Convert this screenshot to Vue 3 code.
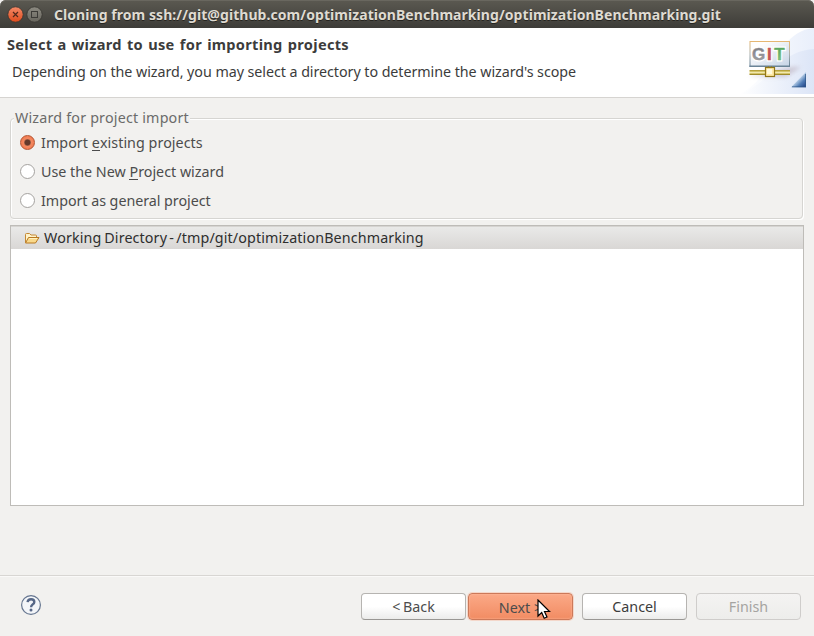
<script setup>
import { ref } from 'vue'

const options = [
  { id: 'existing', before: 'Import ', key: 'e', after: 'xisting projects' },
  { id: 'new', before: 'Use the New ', key: 'P', after: 'roject wizard' },
  { id: 'general', before: 'Import as general project', key: '', after: '' }
]
const selected = ref('existing')
</script>

<template>
  <div class="window">
    <header class="titlebar">
      <svg class="controls" width="40" height="20" viewBox="0 0 40 20">
        <defs>
          <linearGradient id="close" x1="0" y1="0" x2="0" y2="1">
            <stop offset="0" stop-color="#f58a68" /><stop offset="1" stop-color="#df4b1c" />
          </linearGradient>
          <linearGradient id="max" x1="0" y1="0" x2="0" y2="1">
            <stop offset="0" stop-color="#8c8a81" /><stop offset="1" stop-color="#67655d" />
          </linearGradient>
        </defs>
        <circle cx="9.5" cy="10.5" r="7.7" fill="url(#close)" stroke="#35342f" stroke-width=".8" />
        <path d="M7 8l5 5M12 8l-5 5" stroke="#51281b" stroke-width="1.2" />
        <circle cx="28.5" cy="10.5" r="7.7" fill="url(#max)" stroke="#35342f" stroke-width=".8" />
        <rect x="25.5" y="7.5" width="6" height="6" fill="none" stroke="#3c3b37" />
      </svg>
      <h1><span>Cloning from ssh://git@github.com/optimizationBenchmarking/optimizationBenchmarking.git</span></h1>
    </header>

    <section class="banner">
      <div class="intro">
        <h2><span>Select a wizard to use for importing projects</span></h2>
        <p><span>Depending on the wizard, you may select a directory to determine the wizard's scope</span></p>
      </div>
      <svg class="art" width="75" height="66" viewBox="739 28 75 66">
        <defs>
          <linearGradient id="sky" x1="0" y1="0" x2="1" y2="0">
            <stop offset="0" stop-color="#fff" /><stop offset="1" stop-color="#dce5f7" />
          </linearGradient>
          <linearGradient id="sky2" x1="0" y1="0" x2="1" y2="0">
            <stop offset="0" stop-color="#fff" /><stop offset="1" stop-color="#e9effb" />
          </linearGradient>
          <linearGradient id="board" x1="0" y1="0" x2="1" y2="1">
            <stop offset=".2" stop-color="#fff" /><stop offset="1" stop-color="#c5d3e5" />
          </linearGradient>
          <linearGradient id="frame" x1="0" y1="0" x2="0" y2="1">
            <stop offset="0" stop-color="#e5b773" /><stop offset=".5" stop-color="#a9b0ae" /><stop offset="1" stop-color="#648096" />
          </linearGradient>
          <linearGradient id="corner" x1="0" y1="0" x2="1" y2="1">
            <stop offset=".45" stop-color="#c9dcf0" /><stop offset=".7" stop-color="#537fb7" /><stop offset="1" stop-color="#18397f" />
          </linearGradient>
          <linearGradient id="gray" x1="0" y1="0" x2="0" y2="1">
            <stop offset="0" stop-color="#77777e" /><stop offset="1" stop-color="#a9a9ac" />
          </linearGradient>
          <linearGradient id="green" x1="0" y1="0" x2="0" y2="1">
            <stop offset="0" stop-color="#4b9c50" /><stop offset="1" stop-color="#8bcb91" />
          </linearGradient>
          <filter id="soft" x="-20%" y="-50%" width="140%" height="200%"><feGaussianBlur stdDeviation="2" /></filter>
        </defs>
        <path d="M739 94C772 80 778 31 814 28V94Z" fill="url(#sky2)" />
        <path d="M739 94C772 84 775 52 814 49V94Z" fill="url(#sky)" />
        <path d="M748 76l44-9h9l-15 10z" fill="#b5a8b5" opacity=".55" filter="url(#soft)" />
        <rect x="750" y="41.5" width="39.5" height="25" fill="url(#board)" stroke="url(#frame)" />
        <path d="M749.5 66.2h40.5" stroke="#6a8497" stroke-width="1.6" />
        <g class="halo">
          <text x="752" y="60">G</text>
          <text x="767" y="60">I</text>
          <text x="774.3" y="60">T</text>
        </g>
        <g class="letters">
          <text x="752" y="60" fill="url(#gray)" stroke="#939398">G</text>
          <text x="767" y="60" fill="#c65357" stroke="#c65357">I</text>
          <text x="774.3" y="60" fill="url(#green)" stroke="#6db374">T</text>
        </g>
        <path d="M749.5 70.5h40.5" stroke="#b7a23c" />
        <path d="M749.5 71.5h40.5M749.5 73.5h40.5" stroke="#d4c369" />
        <path d="M749.5 72.5h40.5" stroke="#f1e8ae" />
        <path d="M749.5 74.5h40.5" stroke="#a08c2c" />
        <path d="M768.5 66v2M771.5 66v2" stroke="#8d8445" />
        <rect x="765.5" y="67.5" width="9" height="9" fill="#ffe9a5" stroke="#917619" stroke-width="1.2" />
        <rect x="767" y="69" width="5" height="5" fill="#fff9dc" />
        <path d="M791 87.3L806 72V87.3Z" fill="url(#corner)" />
        <path d="M792 86.8h14M805.5 74v13" stroke="#315989" opacity=".7" />
      </svg>
    </section>

    <main class="content">
      <fieldset class="group">
        <legend><span>Wizard for project import</span></legend>
        <label v-for="option in options" :key="option.id" :class="['choice', option.id]">
          <input v-model="selected" type="radio" name="wizard" :value="option.id">
          <span class="label">{{ option.before }}<u v-if="option.key">{{ option.key }}</u>{{ option.after }}</span>
        </label>
      </fieldset>
      <div class="tree">
        <div class="row">
          <svg width="16" height="16" viewBox="0 0 16 16">
            <path d="M1.5 12.5V4.5Q1.5 3.5 2.5 3.5H5.5L7 5H11.5Q12.5 5 12.5 6V7" fill="#fff3c9" stroke="#c48835" />
            <path d="M1.5 13L4.5 7.5H15L11.5 13Z" fill="#f9d98b" stroke="#b87820" stroke-linejoin="round" />
            <path d="M5.2 8.5h8" stroke="#fff1bf" />
          </svg>
          <span class="path">Working Directory <span class="dash">-</span> /tmp/git/optimizationBenchmarking</span>
        </div>
      </div>
    </main>

    <footer class="actions">
      <svg class="help" width="22" height="22" viewBox="0 0 22 22">
        <circle cx="11" cy="11" r="9.4" fill="#f3f5f8" stroke="#65758f" stroke-width="1.2" />
        <path d="M7.6 8.2Q7.9 5.2 11.1 5.2Q14.3 5.2 14.3 7.9Q14.3 9.5 12.6 10.5Q11.1 11.5 11.1 13.3" fill="none" stroke="#566787" stroke-width="2.4" />
        <circle cx="11" cy="16" r="1.5" fill="#566787" />
      </svg>
      <div class="buttons">
        <button class="back"><span>&lt; Back</span></button>
        <button class="next"><span>Next &gt;</span></button>
        <button class="cancel"><span>Cancel</span></button>
        <button class="finish" disabled><span>Finish</span></button>
      </div>
      <svg class="cursor" width="14" height="21" viewBox="0 0 14 21">
        <path d="M1 1V17L4.7 13.5L7.2 19.3L10 18L7.5 12.5H12.5Z" fill="#fff" stroke="#000" stroke-width="1.2" />
      </svg>
    </footer>
  </div>
</template>

<style>
body { margin: 0; background: #f2f1ef; overflow: hidden; }
</style>

<style scoped>
* { box-sizing: border-box; }
.window { width: 814px; height: 636px; display: flex; flex-direction: column; background: #f2f1ef; color: #4c4c4c; font: 14.3px/20px "Noto Sans", sans-serif; white-space: nowrap; }
h1, h2, p { margin: 0; }
.titlebar { height: 28px; flex: none; display: flex; align-items: center; padding: 1px 0 0 6px; border-radius: 6px 6px 0 0; background: linear-gradient(#5b5951, #3d3c38); box-shadow: inset 0 1px #69675f; }
.controls { flex: none; margin-top: -2px; }
h1 { margin-left: 8px; color: #dfdbd2; font-size: 14px; font-weight: 700; line-height: 20px; letter-spacing: .06px; text-shadow: 0 1px #25241f; }
.banner { height: 70px; flex: none; display: flex; justify-content: space-between; background: #fff; border-bottom: 1px solid #d6d4d1; }
.intro { padding: 6px 0 0 7px; display: flex; flex-direction: column; gap: 8px; color: #3c3c3c; }
h2 { font-size: 14.6px; line-height: 20px; letter-spacing: .29px; word-spacing: 1.1px; }
p { padding-left: 5px; letter-spacing: -.06px; }
.letters, .halo { font: 700 17px "Liberation Sans", sans-serif; }
.letters { stroke-width: .5px; }
.halo { fill: #fff; stroke: #fff; stroke-width: 3px; }
.content { flex: 1; padding: 10px 10px 0; }
.group { position: relative; height: 111px; margin: 0; padding: 5px 0 0 9px; border: 0; display: flex; flex-direction: column; gap: 9px; }
.group::before { content: ""; position: absolute; inset: -10px 1px 0 0; border: 1px solid #d6d5d2; border-radius: 4px; box-shadow: 1px 1px #fff, inset 1px 1px #fff; }
legend { position: relative; z-index: 1; height: 20px; margin-left: -5px; padding: 0 1px 0 1px; background: #f2f1ef; color: #6b6b6a; letter-spacing: .19px; }
.choice { position: relative; display: flex; align-items: center; gap: 6px; height: 20px; }
.existing { letter-spacing: .05px; }
.general { letter-spacing: -.04px; }
.choice input { appearance: none; width: 15px; height: 15px; margin: 0 0 1px 1px; border: 1px solid #a4a29f; border-radius: 50%; background: #fff; }
.choice input:checked { border-color: #b55431; background: radial-gradient(circle, #64392b 0 2.6px, #bc6e50 3.3px, #f38860 4px, #ee7044); }
u { text-decoration: none; box-shadow: 0 -1px #4c4c4c inset; display: inline-block; height: 18px; line-height: 20px; }
.tree { height: 281px; margin: 6px 0 0; width: 794px; border: 1px solid #bebcb8; background: #fff; }
.row { height: 23px; display: flex; align-items: center; gap: 4px; padding-left: 13px; color: #2e2e2e; background: linear-gradient(#eaeae9, #d9d7d5); box-shadow: inset 0 1px #d6d4d1; }
.path { letter-spacing: .12px; word-spacing: -.9px; }
.dash { margin: 0 -.7px; }
.actions { position: relative; height: 61px; flex: none; display: flex; justify-content: space-between; align-items: flex-start; padding: 17px 13px 0 20px; border-top: 1px solid #d8d6d3; box-shadow: inset 0 1px #faf9f8; }
.help { margin-top: 1px; }
.buttons { display: flex; gap: 9px; }
button { width: 105px; height: 27px; padding: 0; border: 1px solid #b6b4b1; border-bottom-color: #999794; border-radius: 4px; background: linear-gradient(#fff 50%, #ececeb); color: #4c4c4c; font: inherit; line-height: 25px; }
.back { word-spacing: -1px; }
.next { margin-left: -7px; border-color: #cc7959; background: linear-gradient(#fba987, #f28c63); box-shadow: 0 0 0 1px #f6b69a70, inset 0 0 2px #ffc3a9; }
.next span { position: relative; top: 1px; }
.cancel { color: #3c3c3c; }
button:disabled { border-color: #cfcdcb; color: #a5a4a1; background: linear-gradient(#f4f3f2, #ededeb); }
.cursor { position: absolute; left: 537px; top: 23px; }
</style>
